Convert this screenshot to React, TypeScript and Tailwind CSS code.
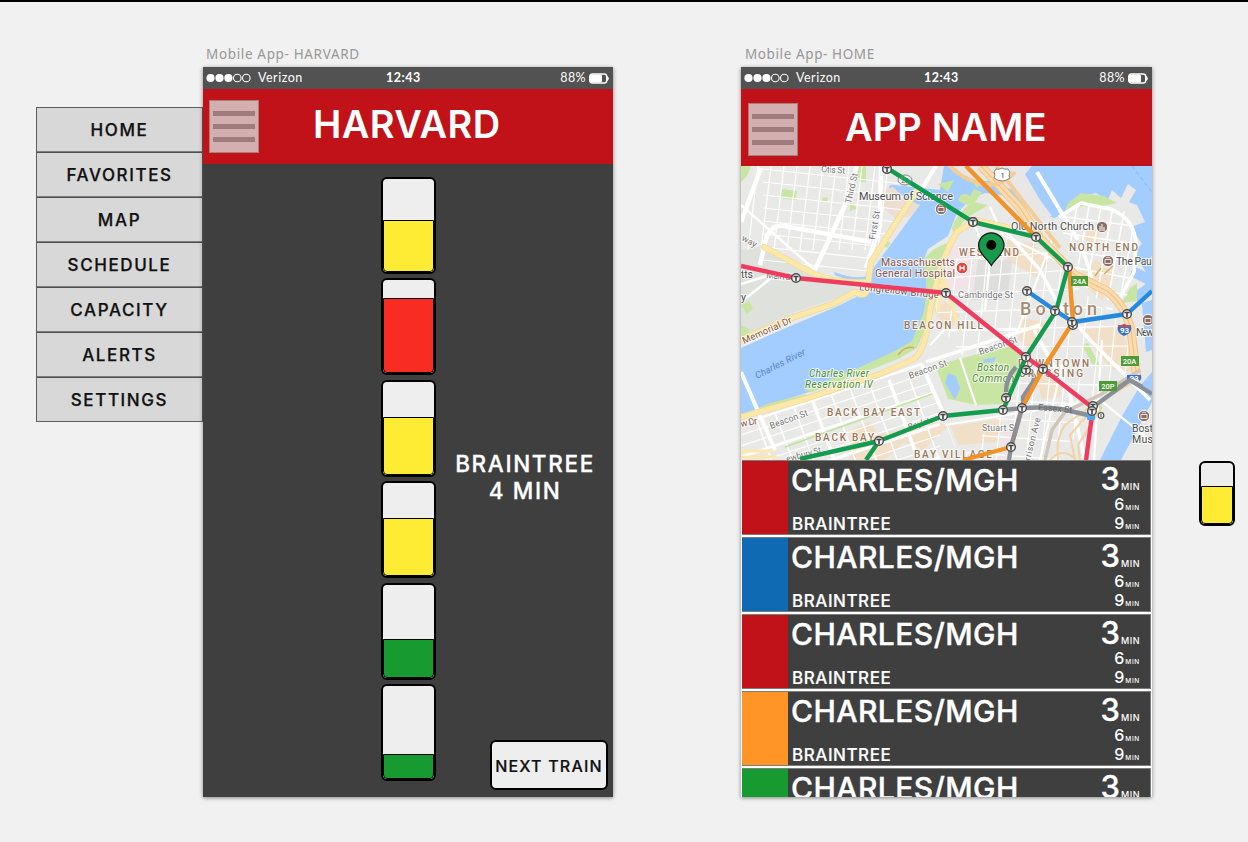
import React from "react";

const menuItems = ["HOME", "FAVORITES", "MAP", "SCHEDULE", "CAPACITY", "ALERTS", "SETTINGS"];

const cars = [
  { fill: 52, color: "bg-[#feec34]" },
  { fill: 75, color: "bg-[#f82c22]" },
  { fill: 58, color: "bg-[#feec34]" },
  { fill: 58, color: "bg-[#feec34]" },
  { fill: 39, color: "bg-[#179a2f]" },
  { fill: 25, color: "bg-[#179a2f]" },
];

const lines = ["bg-[#c01218]", "bg-[#106ab3]", "bg-[#c01218]", "bg-[#ff9526]", "bg-[#179a2f]"];

function StatusBar() {
  return (
    <div className="flex h-[22px] shrink-0 items-center bg-[#525252] pl-[3px] pr-[3px] text-[12.5px] leading-none text-white">
      <svg width="46" height="10" viewBox="0 0 46 10">
        {[4.5, 13.5, 22.4].map((x) => (
          <circle key={x} cx={x} cy="5" r="4.1" fill="#fff" />
        ))}
        {[31.3, 40.3].map((x) => (
          <circle key={x} cx={x} cy="5" r="3.8" fill="none" stroke="#fff" strokeWidth="1.1" />
        ))}
      </svg>
      <span className="ml-[6px] mt-px w-[128px] tracking-[0.5px]">Verizon</span>
      <span className="mt-px font-bold tracking-[0.5px]">12:43</span>
      <span className="ml-auto mr-[3px] mt-px tracking-[0.4px]">88%</span>
      <svg width="21" height="11" viewBox="0 0 21 11">
        <rect x="0.7" y="1" width="17" height="9" rx="2.6" fill="none" stroke="#fff" strokeWidth="1.4" />
        <rect x="1" y="1.500" width="12" height="8" rx="1.5" fill="#fff" />
        <path d="M18.300 3.400Q20.800 5.500 18.300 7.600Z" fill="#fff" stroke="#fff" strokeWidth=".8" />
      </svg>
    </div>
  );
}

function MenuButton() {
  return (
    <button className="flex h-[53px] w-[50px] shrink-0 flex-col justify-center gap-[8px] border border-[#a87f7f] bg-[#d4afaf] px-[3px]">
      <span className="h-[5px] bg-[#a07b7b]" />
      <span className="h-[5px] bg-[#a07b7b]" />
      <span className="h-[5px] bg-[#a07b7b]" />
    </button>
  );
}

function Car({ fill, color }: { fill: number; color: string }) {
  return (
    <div className="flex h-[97px] w-[55px] shrink-0 flex-col justify-end overflow-hidden rounded-[6px] border-2 border-black bg-[#eee]">
      <div className={`rounded-b-[4px] border border-t border-black ${color}`} style={{ height: fill }} />
    </div>
  );
}

function Row({ color }: { color: string }) {
  return (
    <div className="flex h-[77px] w-full shrink-0 flex-col bg-white px-px">
      <div className="flex h-[74.5px] border border-l-0 border-[#7d7d7d] bg-[#3f3f3f] text-white">
        <div className={`w-[46px] shrink-0 ${color}`} />
        <div className="flex flex-1 flex-col justify-between pl-[3px] pb-[2px] pt-[3px] font-medium">
          <div className="text-[30px] leading-[32px] tracking-[0.45px] [-webkit-text-stroke:0.4px_white]">CHARLES/MGH</div>
          <div className="pl-px text-[17px] leading-[16px] tracking-[0.55px] [-webkit-text-stroke:0.2px_white]">BRAINTREE</div>
        </div>
        <div className="flex flex-col items-end pr-[10px] font-medium">
          <div className="mt-[2px] flex h-[33px] items-baseline text-[31px] leading-[32px] [-webkit-text-stroke:0.3px_white]">
            3<span className="ml-px text-[9px] leading-none tracking-[0.5px] [-webkit-text-stroke:0px]">MIN</span>
          </div>
          <div className="flex h-[19px] items-baseline text-[16px] leading-[16px]">
            6<span className="ml-px text-[6.5px] leading-none tracking-[0.7px]">MIN</span>
          </div>
          <div className="flex h-[17px] items-baseline text-[16px] leading-[16px]">
            9<span className="ml-px text-[6.5px] leading-none tracking-[0.7px]">MIN</span>
          </div>
        </div>
      </div>
    </div>
  );
}

const stations: [number, number][] = [
  [887, 169], [973, 222], [1036, 237], [1068, 267], [796, 278], [946, 293], [1027, 291],
  [1055, 311], [1073, 325], [1072, 322], [1127, 314], [1026, 357], [1026, 370], [1043, 369],
  [1006, 398], [1003, 410], [1022, 408], [943, 416], [879, 441], [1011, 447], [1093, 406], [1092, 411],
];

type LabelProps = { x: number; y: number; w: number; s: number; c?: string; r?: number; i?: boolean; b?: boolean; children: string };
function Label({ x, y, w, s, c = "#4c4c4c", r = 0, i, b, children }: LabelProps) {
  return (
    <text
      x={x}
      y={y}
      textLength={w}
      fontSize={s}
      fill={c}
      fontStyle={i ? "italic" : undefined}
      fontWeight={b ? 500 : 400}
      transform={r ? `rotate(${r} ${x} ${y})` : undefined}
      stroke="#fff"
      strokeOpacity=".75"
      strokeWidth="2"
      paintOrder="stroke"
    >
      {children}
    </text>
  );
}

function CityMap() {
  return (
    <svg className="block shrink-0" width="411" height="294" viewBox="741 166 411 294" fontFamily="Roboto, sans-serif">
      <defs>
        <clipPath id="cambridge">
          <path d="M741 166H925L871 268L862 290L741 264Z" />
        </clipPath>
        <clipPath id="backbay">
          <path d="M741 423L805 402L868 382L922 362L944 416L960 460H741Z" />
        </clipPath>
        <clipPath id="downtown">
          <path d="M932 300L950 260L1036 240L1075 285L1128 330L1135 375L1092 408L1060 460H960L1003 412L944 330Z" />
        </clipPath>
        <clipPath id="northend">
          <path d="M1060 220L1075 203L1128 212L1138 240L1132 290L1110 312L1074 276Z" />
        </clipPath>
      </defs>
      <rect x="741" y="166" width="411" height="294" fill="#e9e9e8" />
      <path d="M741 250L765 246L805 270L862 290L795 312L741 338Z" fill="#dfe2dc" />
      {/* green areas */}
      <g fill="#c9e5a4">
        <path d="M782 189L797 191L795 200L780 198Z" />
        <path d="M823 197l5 1-1 4-5-1zM850 202l8 6-8 3zM856 166h10v16h-7zM741 166h10l-4 10-6 6zM741 325l8 4 1 5-9 3zM741 305l8-4 4 7-6 6z" />
        <path d="M884 240l7 3-4 5-5-3z" />
      </g>
      {/* river and harbour */}
      <g fill="#a3ccff">
        <path d="M741 348L788 327L836 307L862 294L872 270L900 232L919 206L902 196L889 190Q888 184 894 185L940 190L944 166H1040L1068 210L1055 218L1034 213L1009 196L985 193L972 198L957 213L948 236L928 249L922 265L932 280L927 310L915 344L895 355L868 371L806 393L741 414Z" />
        <path d="M1033 166H1152V290L1138 302L1132 294L1146 284L1130 276L1133 266L1146 272L1133 252L1142 244L1131 227L1145 222L1137 205L1129 202L1136 190L1128 184L1121 198L1112 190L1108 200L1096 193L1079 197L1066 211Z" />
        <path d="M1142 303L1152 300V350L1146 352Z" />
        <path d="M1152 372L1140 386L1122 416L1100 460H1121L1136 432L1152 402Z" />
        <path d="M834 272Q855 280 868 276L866 280Q850 282 835 275Z" />
      </g>
      <path d="M882 190L893 187Q905 200 920 205L910 217L895 218L880 205Z" fill="#ecdfd2" />
      <path d="M948 166H1032L1025 174L1040 200L1052 216L1040 220L1015 191L990 181Q960 181 948 166Z" fill="#e8e7e5" />
      <g fill="#c9e5a4">
        <path d="M922 263Q930 248 948 243L944 275L930 318L917 348L900 358L863 373L812 392L804 390L860 367L893 352L912 341L923 314Q930 285 922 263Z" />
        <path d="M744 414L770 403L806 394L804 399L741 418Z" />
        <path d="M952 228Q957 212 973 202L988 205L965 219L954 236Z" />
        <path d="M958 200q4-10 12-4l4-7 8 3-6 9q-8 8-18-1zM970 179l14 3-7 6zM938 184l16-4-6 12z" />
        <path d="M1064 214L1068 203L1081 193L1104 196L1117 203L1098 207L1079 206Z" />
        <path d="M1130 288l7-5v18l-15 2zM1082 345l6-2 12 23-8-2zM1046 240l6 1-3 9zM1098 404l5 3-3 5z" />
      </g>
      {/* beige city blocks */}
      <g fill="#f2dfc7">
        <path d="M1007 240L1033 243L1048 263L1037 278L1007 260Z" />
        <path d="M1075 277L1096 260L1115 275L1102 300L1085 286ZM1088 228l13 2-5 14-13-5z" />
        <path d="M1078 330L1118 326L1137 360L1130 372L1111 369L1093 347Z" />
        <path d="M1020 318L1048 322L1030 350L1018 338ZM1035 375L1064 377L1060 397L1042 399Z" />
        <path d="M850 430L870 422L878 434L900 430L925 417L948 426L923 450L904 442L885 460H850ZM951 426l51-7-4 23-40 3z" />
        <path d="M933 310L945 301L960 315L949 331Z" />
      </g>
      <path d="M947 245h27v44h-27zM1005 430l13 2-6 28h-15z" fill="#f2e3e8" />
      <path d="M978 260h34l-5 40h-35z" fill="#dededd" />

      {/* street grids */}
      <g clipPath="url(#cambridge)" stroke="#fff" strokeWidth="1.2">
        {[0, 1, 2, 3, 4, 5, 6, 7, 8, 9, 10].map((k) => (
          <path key={k} d={`M${758 + k * 13} 166L${748 + k * 13} 250`} />
        ))}
        {[0, 1, 2, 3, 4, 5, 6, 7].map((k) => (
          <path key={k} d={`M763 ${169 + k * 13}L905 ${184 + k * 13}`} />
        ))}
      </g>
      <g clipPath="url(#backbay)" stroke="#fff" fill="none">
        {[0, 1, 2, 3, 4, 5, 6, 7, 8, 9].map((k) => (
          <path key={k} strokeWidth={k % 3 ? 1.2 : 3} d={`M741 ${424 + k * 11}L940 ${358 + k * 11}`} />
        ))}
        {[0, 1, 2, 3, 4, 5, 6, 7, 8, 9].map((k) => (
          <path key={k} strokeWidth={k % 4 === 3 ? 3.5 : 1.5} d={`M${742 + k * 21} 380L${775 + k * 21} 470`} />
        ))}
        <path d="M785 447L935 393" stroke="#c0e39b" strokeWidth="1.8" />
      </g>
      <g clipPath="url(#downtown)" stroke="#fff" strokeWidth="1.2">
        {[0, 1, 2, 3, 4, 5, 6, 7, 8, 9, 10, 11, 12, 13, 14].map((k) => (
          <path key={k} d={`M${930 + k * 15} 230L${905 + k * 15} 470`} />
        ))}
        {[0, 1, 2, 3, 4, 5, 6, 7, 8, 9, 10, 11].map((k) => (
          <path key={k} d={`M925 ${262 + k * 17}L1140 ${246 + k * 20}`} />
        ))}
      </g>
      <path d="M937 370L944 363L1012 345L1020 352L1025 362L1003 404L976 405L948 399Z" fill="#c9e5a4" />
      <path d="M948 373l8 3 4 12-5 12-6-10-4-7zM984 359l12-2-2 5-11 1z" fill="#a3ccff" />
      <g clipPath="url(#northend)" stroke="#fff" strokeWidth="1.6">
        {[0, 1, 2, 3, 4, 5, 6].map((k) => (
          <path key={k} d={`M${1060 + k * 12} 300L${1080 + k * 12} 190`} />
        ))}
        {[0, 1, 2, 3, 4, 5].map((k) => (
          <path key={k} d={`M1050 ${215 + k * 16}L1150 ${228 + k * 18}`} />
        ))}
      </g>

      {/* white avenues */}
      <g fill="none" stroke="#fff" strokeLinejoin="round">
        <path d="M761 168L741 222M760 265L766 239Q771 224 784 226L871 242M857 166L845 205L813 274M881 166L880 225L866 268" strokeWidth="4.5" />
        <path d="M741 284L770 275M741 302L775 275M741 205L815 270" strokeWidth="2.5" />
        <path d="M741 372L775 450M922 365L944 415M936 166L918 195M1037 172L1078 240" strokeWidth="4" />
        <path d="M1059 217L1081 203L1110 209Q1135 218 1136 245L1134 272L1120 298M1000 225L1040 270L1056 300L1090 340L1150 400M1081 244L1092 278M926 362L1040 325M1034 330L1070 395L1085 460" strokeWidth="3.6" />
        <path d="M945 425L1100 400L1152 442M930 345L944 330L1018 330M973 222L990 260L985 310M990 207L1003 235L1072 268M960 358L976 405M1062 365L1040 460M1102 340L1094 460M1018 330L1052 240" strokeWidth="2.2" />
      </g>

      {/* yellow roads */}
      <g fill="none" strokeLinejoin="round" strokeLinecap="round">
        <g stroke="#eed69c" strokeWidth="6.2">
          <path d="M741 340L788 319L833 304L855 292Q868 300 868 284L871 262L917 190" />
          <path d="M764 247L810 272Q835 284 866 282" />
          <path d="M741 417L805 399L880 374L914 359Q926 350 930 310L940 270Q947 248 957 232L975 220L1010 228" />
        </g>
        <g stroke="#fce8a9" strokeWidth="5">
          <path d="M741 340L788 319L833 304L855 292Q868 300 868 284L871 262L917 190" />
          <path d="M764 247L810 272Q835 284 866 282" />
          <path d="M741 417L805 399L880 374L914 359Q926 350 930 310L940 270Q947 248 957 232L975 220L1010 228" />
          <path d="M741 451H772M741 457H776" strokeWidth="3" />
        </g>
        <path d="M938 310L943 276L950 300L960 330" stroke="#fce8a9" strokeWidth="3.5" />
      </g>
      {/* expressway */}
      <g fill="none">
        <path d="M981 166L1020 208L1040 238L1075 275L1107 291Q1125 305 1131 330L1137 380" stroke="#f0c588" strokeWidth="9" />
        <path d="M981 166L1020 208L1040 238L1075 275L1107 291Q1125 305 1131 330L1137 380" stroke="#fbdcae" strokeWidth="7" />
        <path d="M981 166L1020 208L1040 238L1075 275L1107 291Q1125 305 1131 330L1137 380" stroke="#eac38d" strokeWidth="1.2" />
        <path d="M950 166Q962 178 976 182Q1000 190 1015 172M996 166L1026 205L1060 248" stroke="#f3cd95" strokeWidth="4" />
        <path d="M1137 380L1087 409L1065 425Q1055 440 1058 460M1090 412L1070 435L1075 460M1100 410L1078 445L1080 460M1050 460Q1062 447 1074 458" stroke="#f3d2a4" strokeWidth="2" />
        <path d="M1045 460L1052 430L1065 412L1100 395L1140 370" stroke="#cfc5b8" strokeWidth="3.5" />
        <path d="M1095 276l6-8M1104 274l9-8M898 355q8-10 16-7" stroke="#d2ad68" strokeWidth="1.5" />
        <path d="M1132 166L1152 192" stroke="#89aee6" strokeWidth=".8" strokeDasharray="4 3" />
      </g>

      {/* labels below the transit lines */}
      <Label x={821} y={172} w={24} s={9} r={4} c="#777">Otis St</Label>
      <Label x={851} y={204} w={31} s={9} r={-77} c="#777">Third St</Label>
      <Label x={875} y={240} w={29} s={9} r={-80} c="#777">First St</Label>
      <Label x={741} y={240} w={16} s={9} r={28} c="#777">way</Label>
      <Label x={766} y={278} w={27} s={9} r={5} c="#777">Main St</Label>
      <Label x={741} y={278} w={12} s={10.5}>tts</Label>
      <Label x={741} y={301} w={4} s={10.5}>y</Label>
      <Label x={859} y={200} w={94} s={11}>Museum of Science</Label>
      <Label x={881} y={266} w={74} s={10.5} c="#8d5347">Massachusetts</Label>
      <Label x={875} y={277} w={80} s={10.5} c="#8d5347">General Hospital</Label>
      <Label x={859} y={290} w={80} s={9.5} r={6} c="#85503a">Longfellow Bridge</Label>
      <Label x={744} y={344} w={53} s={9.5} r={-24} c="#80573c">Memorial Dr</Label>
      <Label x={1011} y={230} w={83} s={10.8}>Old North Church</Label>
      <Label x={959} y={256} w={60} s={10} b c="#98765a">WEST END</Label>
      <Label x={1069} y={251} w={69} s={10} b c="#98765a">NORTH END</Label>
      <Label x={1116} y={265} w={38} s={10.5}>The Paul</Label>
      <Label x={958} y={298} w={55} s={9.3} c="#777">Cambridge St</Label>
      <text x="1020" y="315" textLength="77" fontSize="18" fontWeight="500" fill="#a78a70" stroke="#fff" strokeWidth="1.5" paintOrder="stroke">Boston</text>
      <Label x={904} y={329} w={79} s={10} b c="#98765a">BEACON HILL</Label>
      <text x="757" y="379" transform="rotate(-27 757 379)" textLength="55" fontSize="9.5" fontStyle="italic" fill="#5986cc">Charles River</text>
      <Label x={809} y={377} w={60} s={10} i c="#4d8b2e">Charles River</Label>
      <Label x={805} y={388} w={68} s={10} i c="#4d8b2e">Reservation IV</Label>
      <Label x={977} y={371} w={32} s={10} i c="#4d8b2e">Boston</Label>
      <Label x={972} y={382} w={42} s={10} i c="#4d8b2e">Common</Label>
      <Label x={910} y={379} w={40} s={9} r={-20} c="#777">Beacon St</Label>
      <Label x={980} y={355} w={40} s={9} r={-19} c="#777">Beacon St</Label>
      <Label x={771} y={429} w={40} s={9} r={-20} c="#777">Beacon St</Label>
      <Label x={741} y={427} w={17} s={9.5} r={-10} c="#85503a">w Dr</Label>
      <Label x={827} y={416} w={93} s={10} b c="#98765a">BACK BAY EAST</Label>
      <Label x={815} y={441} w={59} s={10} b c="#98765a">BACK BAY</Label>
      <Label x={914} y={457.5} w={78} s={10} b c="#98765a">BAY VILLAGE</Label>
      <Label x={909} y={430} w={32} s={8.5} r={-18} c="#777">Boylston</Label>
      <Label x={787} y={462} w={36} s={9} r={-15} c="#777">ewbury St</Label>
      <Label x={982} y={431} w={32} s={9} c="#777">Stuart S</Label>
      <Label x={1030} y={461} w={44} s={9} r={-76} c="#777">rrison Ave</Label>
      <Label x={1136} y={336} w={18} s={10.5}>New</Label>
      <Label x={1132} y={432} w={21} s={10.5}>Bost</Label>
      <Label x={1132} y={443} w={21} s={10.5}>Mus</Label>

      {/* transit lines */}
      <g fill="none" strokeWidth="4.4" strokeLinejoin="round">
        <path d="M1003 410L1022 408Q1055 406 1070 411L1092 416M1016 367Q1006 378 1006 392M1093 407L1130 380L1152 394" stroke="#8a9097" />
        <path d="M1026 371Q1037 374 1033 382L1023 397V408" stroke="#8a9097" />
        <Label x={1018} y={367} w={71} s={10} b c="#98765a">DOWNTOWN</Label>
        <Label x={1019} y={377} w={64} s={10} b c="#98765a">CROSSING</Label>
        <path d="M966 166L1036 237M1069 267L1073 322L1043 369L1022 408L1011 447L963 460" stroke="#f2932a" />
        <path d="M1027 291L1056 311L1073 322L1127 314L1152 291" stroke="#2589df" />
        <path d="M887 168L973 222L1036 237L1068 267L1056 311L1026 357L1003 410L943 416L879 441L800 459M879 441L866 460" stroke="#139b50" />
        <path d="M1022 408L1011 447L1009 460" stroke="#8a9097" />
        <path d="M741 266L796 278L946 293L1026 357L1043 369L1093 408L1086 460" stroke="#ee3c5e" />
      </g>
      <text x="1038" y="410" transform="rotate(5 1038 410)" textLength="34" fontSize="9" fill="#666">Essex St</text>
      <rect x="1087" y="412" width="8" height="8" rx="1" fill="#4ba9ee" />
      {stations.map(([x, y]) => (
        <g key={`${x}-${y}`} transform={`translate(${x} ${y})`}>
          <circle r="4.3" fill="#f0f0f0" stroke="#4a4a4a" strokeWidth="1.4" />
          <path d="M-2.6 -1.5H2.6M0 -1.6V3" stroke="#444" strokeWidth="1.6" />
        </g>
      ))}
      <circle cx="1101" cy="415.500" r="2.8" fill="#fff" stroke="#555" strokeWidth="1.2" />
      <path d="M1101 414v3" stroke="#444" />

      {/* places of interest */}
      <g stroke="#fff" strokeWidth="1">
        <circle cx="941" cy="209" r="5.7" fill="#8d6e65" />
        <circle cx="1102" cy="227" r="5.7" fill="#8d6e65" />
        <circle cx="1108" cy="261" r="5.7" fill="#8d6e65" />
        <circle cx="1148" cy="320" r="5.7" fill="#8d6e65" />
        <circle cx="1144" cy="416" r="5.7" fill="#8d6e65" />
        <circle cx="962" cy="268" r="5.8" fill="#e5453d" />
      </g>
      <g fill="none" stroke="#fff" strokeWidth="1">
        <path d="M938 207.500h6v4h-6zM1105 259.500h6v4h-6zM1141 414.500h6v4h-6zM1145 318.500h6v4h-6zM939 206l2-1 2 1M1106 258l2-1 2 1M1142 413l2-1 2 1" strokeWidth=".8" />
        <path d="M1099 230h6M1100 229v-3M1102 229v-5M1104 229v-2" />
        <path d="M960 265.500v5M964 265.500v5M960 268h4" strokeWidth="1.3" />
      </g>

      {/* road shields */}
      <path d="M996 169q3 1 6-1 3 2 6 1l2 3q-2 4 0 6-4 3-8 3t-8-3q2-3 0-6z" fill="#fff" stroke="#777" strokeWidth=".9" />
      <text x="1002.500" y="178" textAnchor="middle" fontSize="7.500" fill="#333">1</text>
      <ellipse cx="905" cy="180" rx="7" ry="5" fill="#eee" stroke="#888" strokeWidth="1" />
      <text x="905" y="182.500" textAnchor="middle" fontSize="6.500" fill="#666">28</text>
      <path d="M887 168L973 222" stroke="#139b50" strokeWidth="4.4" strokeOpacity=".9" />
      <g fill="#4d9a36">
        <rect x="1071" y="276" width="17" height="10" />
        <rect x="1121" y="356" width="18" height="10" />
        <rect x="1099" y="381" width="18" height="10" />
      </g>
      <g fill="#fff" fontSize="7.500" fontWeight="500" textAnchor="middle">
        <text x="1079.500" y="284">24A</text>
        <text x="1129.500" y="364">20A</text>
        <text x="1108" y="389">20P</text>
      </g>
      <path d="M1118 325q3 1 6-1 4 2 7 1 2 8-7 11-8-3-6-11z" fill="#3b70c8" />
      <path d="M1118 325q3 1 6-1 4 2 7 1v2h-13z" fill="#cf4b4b" />
      <path d="M1127 375h14q1 3-1 6l-6-3-7 4z" fill="#3b70c8" />
      <g fill="#fff" fontSize="8" fontWeight="700" textAnchor="middle">
        <text x="1124.500" y="333">93</text>
        <text x="1134" y="381">93</text>
      </g>
      <path d="M1119 387L1130 380L1142 387" fill="none" stroke="#8a9097" strokeWidth="4.400" />
      <g transform="translate(887 169)">
        <circle r="4.3" fill="#f0f0f0" stroke="#4a4a4a" strokeWidth="1.4" />
        <path d="M-2.6 -1.5H2.6M0 -1.6V3" stroke="#444" strokeWidth="1.6" />
      </g>
      <g transform="translate(973 222)">
        <circle r="4.3" fill="#f0f0f0" stroke="#4a4a4a" strokeWidth="1.4" />
        <path d="M-2.6 -1.5H2.6M0 -1.6V3" stroke="#444" strokeWidth="1.6" />
      </g>

      {/* current position */}
      <path d="M991.300 265.500C988 259 978.600 254 978.600 245.500A12.700 12.700 0 0 1 1004 245.500C1004 254 995 259 991.300 265.500Z" fill="#179a4b" stroke="#111" strokeWidth="1.200" />
      <circle cx="991.300" cy="245" r="5" fill="#000" />
    </svg>
  );
}

export default function App() {
  return (
    <div className="h-[842px] w-[1248px] overflow-hidden border-t-2 border-black bg-[#f1f1f1] font-['Inter',sans-serif]">
      <div className="flex items-start pl-[36px] pt-[43px]">
        <nav className="mt-[62px] flex h-[315px] w-[167px] flex-col gap-px border border-[#5e5e5e] bg-[#4f4f4f]">
          {menuItems.map((item) => (
            <a
              key={item}
              className="flex flex-1 items-center justify-center border-b border-[#7d7d7d] bg-[#d8d8d8] pt-[2px] text-[17px] font-medium tracking-[1.6px] text-[#111] [-webkit-text-stroke:0.25px_#111] last:border-b-0"
            >
              {item}
            </a>
          ))}
        </nav>

        <section className="flex w-[410px] flex-col">
          <h2 className="h-[22px] whitespace-nowrap pl-[3px] pt-px font-['Noto_Sans',sans-serif] text-[13.5px] leading-[17px] tracking-[0.65px] text-[#979797]">
            Mobile App- HARVARD
          </h2>
          <div className="flex h-[730px] flex-col overflow-hidden bg-[#3f3f3f] font-['Lato',sans-serif] shadow-[0_1px_4px_rgba(0,0,0,0.45)]">
            <StatusBar />
            <header className="flex h-[75px] shrink-0 items-start bg-[#c01218] pl-[6px] pt-[11px] font-['Inter',sans-serif]">
              <MenuButton />
              <h1 className="ml-[54px] mt-[11px] text-[38px] font-semibold leading-[26px] tracking-[0.4px] text-white">HARVARD</h1>
            </header>
            <div className="flex flex-1 items-start pl-[178px] pt-[13px] font-['Inter',sans-serif]">
              <div className="flex flex-col gap-[4.4px]">
                {cars.map((car, i) => (
                  <Car key={i} {...car} />
                ))}
              </div>
              <div className="flex h-[613px] flex-1 flex-col justify-between">
                <p className="mt-[273px] pl-[1px] text-center text-[22.5px] font-medium leading-[27px] tracking-[1.65px] text-white [-webkit-text-stroke:0.3px_white]">
                  BRAINTREE
                  <br />4 MIN
                </p>
                <button className="mr-[5px] flex h-[50px] w-[118px] items-center justify-center self-end whitespace-nowrap rounded-[6px] border-2 border-black bg-[#eee] pt-[2px] text-[16px] font-medium tracking-[1.2px] text-[#111] [-webkit-text-stroke:0.2px_#111]">
                  NEXT TRAIN
                </button>
              </div>
            </div>
          </div>
        </section>

        <section className="ml-[128px] flex w-[411px] flex-col">
          <h2 className="h-[22px] whitespace-nowrap pl-[4px] pt-px font-['Noto_Sans',sans-serif] text-[13.5px] leading-[17px] tracking-[0.6px] text-[#979797]">
            Mobile App- HOME
          </h2>
          <div className="flex h-[730px] flex-col overflow-hidden bg-white font-['Lato',sans-serif] shadow-[0_1px_4px_rgba(0,0,0,0.45)]">
            <StatusBar />
            <header className="flex h-[77px] shrink-0 items-start bg-[#c01218] pl-[7px] pt-[14px] font-['Inter',sans-serif]">
              <MenuButton />
              <h1 className="ml-[47px] mt-[11px] text-[38px] font-semibold leading-[26px] tracking-[0.1px] text-white">APP NAME</h1>
            </header>
            <CityMap />
            <div className="flex flex-1 flex-col overflow-hidden font-['Inter',sans-serif]">
              {lines.map((color, i) => (
                <Row key={i} color={color} />
              ))}
            </div>
          </div>
        </section>

        <div className="ml-[47px] mt-[416px] flex h-[65px] w-[36px] flex-col justify-end overflow-hidden rounded-[6px] border-2 border-black bg-[#eee]">
          <div className="h-[38px] rounded-b-[4px] border border-black bg-[#feec34]" />
        </div>
      </div>
    </div>
  );
}
